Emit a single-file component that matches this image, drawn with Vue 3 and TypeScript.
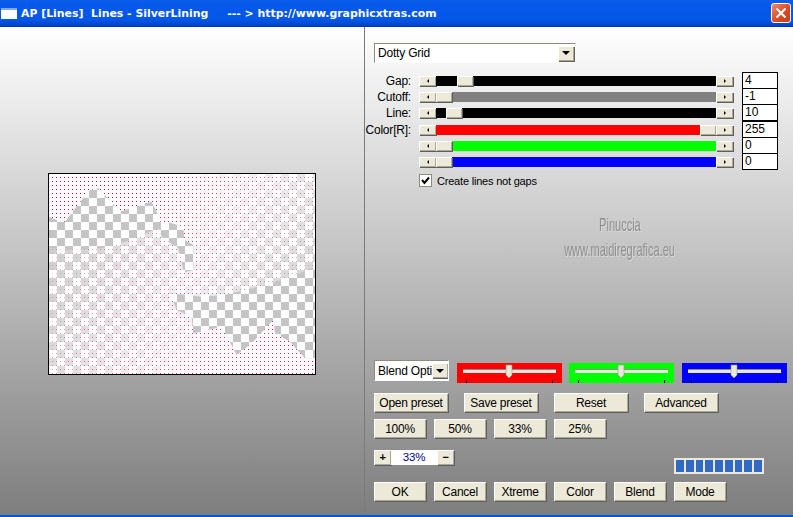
<script setup lang="ts">
interface SliderRow {
  label: string
  color: string
  offset: number
  value: string
}

const rows: SliderRow[] = [
  { label: 'Gap:', color: '#000', offset: 21, value: '4' },
  { label: 'Cutoff:', color: '#808080', offset: 0, value: '-1' },
  { label: 'Line:', color: '#000', offset: 10, value: '10' },
  { label: 'Color[R]:', color: '#f00', offset: 264, value: '255' },
  { label: '', color: '#0f0', offset: 0, value: '0' },
  { label: '', color: '#00f', offset: 0, value: '0' }
]

const trackbars = ['#f00', '#0f0', '#00f']
const presetButtons = ['Open preset', 'Save preset', 'Reset', 'Advanced']
const zoomButtons = ['100%', '50%', '33%', '25%']
const actionButtons = ['OK', 'Cancel', 'Xtreme', 'Color', 'Blend', 'Mode']

// outlines traced from a 3x crop of the preview, turned into svg pixels here
const toPoints = (list: number[][]) =>
  list.map(([x, y]) => `${(x - 12) / 3},${(y - 12) / 3}`).join(' ')

const topShape = toPoints([
  [0, 0], [810, 0], [810, 290], [740, 320], [640, 350], [540, 375], [470, 380], [375, 370],
  [385, 315], [445, 300], [445, 225], [418, 210], [415, 170], [375, 158], [350, 165],
  [335, 125], [320, 95], [300, 100], [225, 125], [190, 85], [160, 55], [135, 60], [90, 115],
  [60, 155], [35, 150], [0, 135]
])

const lowShape = toPoints([
  [0, 230], [60, 240], [170, 235], [240, 215], [340, 175], [350, 200], [400, 235], [415, 300],
  [385, 315], [375, 370], [395, 420], [440, 440], [445, 490], [530, 470], [575, 555],
  [620, 520], [685, 450], [690, 490], [735, 515], [780, 565], [815, 565], [815, 620], [0, 620]
])
</script>

<template>
  <div class="window">
    <header class="titlebar">
      <span class="app-icon"></span>
      <span class="title">AP [Lines]&nbsp; Lines - SilverLining &nbsp; &nbsp; --- &gt; http://www.graphicxtras.com</span>
      <span class="close">
        <svg width="12" height="12" viewBox="0 0 12 12">
          <path d="M1.5 1.5 L10.5 10.5 M10.5 1.5 L1.5 10.5" stroke="#fff" stroke-width="2.2" />
        </svg>
      </span>
    </header>

    <main class="body">
      <section class="preview-side">
        <svg class="preview" width="268" height="202" viewBox="-1 -1 268 202">
          <defs>
            <pattern id="checker" width="16" height="16" patternUnits="userSpaceOnUse">
              <rect width="16" height="16" fill="#fff" />
              <rect x="8" width="8" height="8" fill="#c4c4c4" />
              <rect y="8" width="8" height="8" fill="#c4c4c4" />
            </pattern>
            <pattern id="dots" x="3" y="3" width="4" height="4" patternUnits="userSpaceOnUse">
              <rect width="1" height="1" fill="#c80c36" />
            </pattern>
            <pattern id="softDots" x="3" y="3" width="4" height="4" patternUnits="userSpaceOnUse">
              <rect width="1" height="1" fill="#e8184c" />
            </pattern>
            <linearGradient id="topFade" gradientUnits="userSpaceOnUse" x1="110" y1="0" x2="266" y2="110">
              <stop offset="0" stop-color="#fff" stop-opacity="1" />
              <stop offset="0.5" stop-color="#fff" stop-opacity="0.72" />
              <stop offset="1" stop-color="#fff" stop-opacity="0.25" />
            </linearGradient>
            <linearGradient id="lowFade" gradientUnits="userSpaceOnUse" x1="0" y1="70" x2="190" y2="170">
              <stop offset="0" stop-color="#fff" stop-opacity="0.15" />
              <stop offset="0.5" stop-color="#fff" stop-opacity="0.6" />
              <stop offset="1" stop-color="#fff" stop-opacity="1" />
            </linearGradient>
            <linearGradient id="lowDots" gradientUnits="userSpaceOnUse" x1="0" y1="70" x2="190" y2="170">
              <stop offset="0" stop-color="#fff" stop-opacity="0.25" />
              <stop offset="1" stop-color="#fff" stop-opacity="1" />
            </linearGradient>
            <linearGradient id="topDots" gradientUnits="userSpaceOnUse" x1="110" y1="0" x2="266" y2="110">
              <stop offset="0" stop-color="#fff" stop-opacity="1" />
              <stop offset="1" stop-color="#fff" stop-opacity="0.25" />
            </linearGradient>
            <mask id="topMask" maskUnits="userSpaceOnUse" x="0" y="0" width="266" height="200">
              <rect width="266" height="200" fill="url(#topDots)" />
            </mask>
            <mask id="lowMask" maskUnits="userSpaceOnUse" x="0" y="0" width="266" height="200">
              <rect width="266" height="200" fill="url(#lowDots)" />
            </mask>
          </defs>
          <rect width="266" height="200" fill="url(#checker)" />
          <polygon :points="topShape" fill="url(#topFade)" />
          <polygon :points="lowShape" fill="url(#lowFade)" />
          <g mask="url(#topMask)"><polygon :points="topShape" fill="url(#dots)" /></g>
          <g mask="url(#lowMask)"><polygon :points="lowShape" fill="url(#softDots)" /></g>
          <rect x="-0.5" y="-0.5" width="267" height="201" fill="none" stroke="#000" />
        </svg>
      </section>

      <section class="controls">
        <div class="select wide">
          <span class="select-text">Dotty Grid</span>
          <span class="bevel select-btn"><i class="tri-down"></i></span>
        </div>

        <div class="sliders">
          <div v-for="row in rows" :key="row.color + row.label" class="slider-row">
            <label class="slider-label">{{ row.label }}</label>
            <div class="scrollbar">
              <span class="bevel arrow"><i class="tri-left"></i></span>
              <div class="track" :style="{ backgroundColor: row.color }">
                <span class="bevel thumb" :style="{ marginLeft: row.offset + 'px' }"></span>
              </div>
              <span class="bevel arrow"><i class="tri-right"></i></span>
            </div>
            <div class="value">{{ row.value }}</div>
          </div>
        </div>

        <div class="check-row">
          <span class="checkbox">
            <svg width="11" height="11" viewBox="0 0 11 11">
              <path d="M2 5 L4.5 8 L9 2.5" fill="none" stroke="#000" stroke-width="2" />
            </svg>
          </span>
          <span>Create lines not gaps</span>
        </div>

        <div class="watermark">
          <span class="mark-line">Pinuccia</span>
          <span class="mark-line">www.maidiregrafica.eu</span>
        </div>

        <div class="blend-row">
          <div class="select narrow">
            <span class="select-text">Blend Opti</span>
            <span class="bevel select-btn"><i class="tri-down"></i></span>
          </div>
          <div class="trackbars">
            <svg
              v-for="color in trackbars"
              :key="color"
              class="trackbar"
              width="105"
              height="20"
              viewBox="0 0 105 20"
            >
              <rect width="105" height="20" :fill="color" />
              <rect x="6" y="6" width="93" height="4" fill="#e8e8e0" />
              <rect x="6" y="6" width="93" height="1" fill="#8a8a80" />
              <rect x="9" y="17" width="1" height="3" fill="#000" />
              <rect x="95" y="17" width="1" height="3" fill="#000" />
              <path d="M49 2 H55 V12 L52 15 L49 12 Z" fill="#ece9d8" stroke="#9a9888" stroke-width="0.6" />
            </svg>
          </div>
        </div>

        <div class="btn-row presets">
          <button v-for="label in presetButtons" :key="label" class="bevel btn">{{ label }}</button>
        </div>

        <div class="btn-row zooms">
          <button v-for="label in zoomButtons" :key="label" class="bevel btn small">{{ label }}</button>
        </div>

        <div class="zoom-row">
          <div class="stepper">
            <span class="bevel step"><b>+</b></span>
            <span class="zoom-value">33%</span>
            <span class="bevel step"><b>−</b></span>
          </div>
          <div class="progress">
            <i v-for="n in 9" :key="n"></i>
          </div>
        </div>

        <div class="btn-row actions">
          <button v-for="label in actionButtons" :key="label" class="bevel btn small">{{ label }}</button>
        </div>
      </section>
    </main>
    <div class="bottom-edge"></div>
  </div>
</template>

<style scoped>
.window {
  width: 793px;
  height: 517px;
  display: flex;
  flex-direction: column;
  overflow: hidden;
  font-family: 'Liberation Sans', Arial, sans-serif;
  font-size: 11px;
  letter-spacing: -0.2px;
  color: #000;
}

/* title bar */
.titlebar {
  height: 27px;
  flex: none;
  display: flex;
  align-items: center;
  position: relative;
  background: linear-gradient(#0a5fe8 0, #0759ec 3px, #0356e6 20px, #0347d0 25px, #02319c 27px);
  color: #fff;
}
.app-icon {
  width: 16px;
  height: 11px;
  margin: 0 4px 0 1px;
  background: #fff;
  border-top: 2px solid #7fa8ee;
}
.title {
  font-family: 'DejaVu Sans', Verdana, sans-serif;
  font-weight: 700;
  font-size: 10.9px;
  letter-spacing: 0;
  white-space: pre;
}
.close {
  position: absolute;
  left: 771px;
  top: 3px;
  width: 20px;
  height: 20px;
  display: flex;
  align-items: center;
  justify-content: center;
  border: 1px solid #fff;
  border-radius: 3px;
  background: linear-gradient(135deg, #f0866a, #dd4a24 55%, #c2401e);
}

/* main area */
.body {
  flex: 1;
  display: flex;
  min-height: 0;
  background: linear-gradient(#fff, #7e7e7e);
}
.preview-side {
  width: 365px;
  flex: none;
  border-right: 1px solid #7a7a7a;
  display: flex;
  justify-content: flex-start;
  padding: 146px 0 0 48px;
}
.preview {
  display: block;
}
.controls {
  flex: 1;
  display: flex;
  flex-direction: column;
  padding: 16px 0 14px 9px;
}

.bevel {
  background: #ece9d8;
  box-shadow: inset 1px 1px 0 #fff, inset -1px -1px 0 #aca899, 1px 1px 0 #5f5e58;
}

/* dropdowns */
.select {
  display: flex;
  align-items: center;
  justify-content: space-between;
  height: 20px;
  background: #fff;
  border: 1px solid #8d8b7d;
  border-right-color: #fff;
  border-bottom-color: #fff;
  padding-right: 1px;
  overflow: hidden;
}
.select.wide {
  width: 202px;
}
.select.narrow {
  width: 75px;
  height: 21px;
}
.select-text {
  padding-left: 3px;
  font-size: 12px;
  white-space: nowrap;
}
.select-btn {
  width: 16px;
  height: 15px;
  flex: none;
  display: flex;
  align-items: center;
  justify-content: center;
  position: relative;
}
.tri-down {
  border-left: 4px solid transparent;
  border-right: 4px solid transparent;
  border-top: 4px solid #000;
}
.tri-left {
  border-top: 2px solid transparent;
  border-bottom: 2px solid transparent;
  border-right: 2px solid #000;
}
.tri-right {
  border-top: 2px solid transparent;
  border-bottom: 2px solid transparent;
  border-left: 2px solid #000;
}

/* slider rows */
.sliders {
  margin: 10px 0 0 -9px;
  display: flex;
  flex-direction: column;
}
.slider-row {
  height: 16px;
  display: flex;
  align-items: center;
}
.slider-row:nth-child(4) {
  margin-top: 1px;
}
.slider-label {
  width: 46px;
  text-align: right;
  font-size: 12px;
  white-space: nowrap;
}
.scrollbar {
  margin-left: 8px;
  width: 314px;
  height: 10px;
  display: flex;
}
.arrow {
  width: 17px;
  flex: none;
  display: flex;
  align-items: center;
  justify-content: center;
}
.track {
  flex: 1;
  display: flex;
}
.thumb {
  width: 16px;
  height: 10px;
  flex: none;
}
.value {
  margin-left: 9px;
  width: 36px;
  height: 17px;
  margin-top: -1px;
  background: #fff;
  border: 1px solid #000;
  padding-left: 2px;
  line-height: 15px;
  font-size: 12px;
  letter-spacing: 0;
}

/* checkbox */
.check-row {
  margin: 4px 0 0 45px;
  height: 13px;
  display: flex;
  align-items: center;
  gap: 5px;
  font-size: 11px;
}
.checkbox {
  width: 13px;
  height: 13px;
  background: #fff;
  border: 1px solid #8d8b7d;
  display: flex;
  align-items: center;
  justify-content: center;
}

/* watermark */
.watermark {
  margin: 25px 0 0 191px;
  width: 110px;
  display: flex;
  flex-direction: column;
  align-items: center;
  color: #8f8f8f;
  font-size: 19px;
  letter-spacing: 0;
  line-height: 25px;
  text-shadow: 1px 1px 0 #dcdcdc;
}
.mark-line {
  transform: scaleX(0.58);
  white-space: nowrap;
}

/* blend row */
.blend-row {
  margin-top: auto;
  display: flex;
  align-items: flex-start;
}
.trackbars {
  margin: 3px 0 0 8px;
  display: flex;
  gap: 7px;
}
.trackbar {
  display: block;
}
.trackbar:last-child {
  margin-left: 1px;
}

/* buttons */
.btn-row {
  display: flex;
}
.presets {
  margin-top: 10px;
  gap: 16px;
}
.zooms {
  margin-top: 7px;
  gap: 8px;
}
.actions {
  margin-top: 8px;
  gap: 8px;
}
.btn {
  width: 74px;
  height: 19px;
  padding: 0;
  border: 0;
  font-family: inherit;
  font-size: 12px;
  letter-spacing: -0.25px;
  color: #000;
}
.btn.small {
  width: 52px;
}

/* zoom stepper and progress */
.zoom-row {
  margin-top: 12px;
  height: 24px;
  display: flex;
  align-items: flex-start;
}
.stepper {
  display: flex;
  width: 80px;
  height: 15px;
}
.step {
  width: 17px;
  flex: none;
  display: flex;
  align-items: center;
  justify-content: center;
  font-size: 11px;
  line-height: 1;
}
.zoom-value {
  flex: 1;
  background: #fff;
  color: #000080;
  text-align: center;
  font-size: 11.5px;
  line-height: 15px;
}
.progress {
  margin: 8px 0 0 220px;
  width: 90px;
  height: 16px;
  padding: 2px;
  background: #ece9d8;
  display: flex;
  gap: 2px;
}
.progress i {
  width: 8px;
  background: #316ac5;
}

.bottom-edge {
  height: 2px;
  flex: none;
  background: #0355e0;
}
</style>

<style>
html,
body {
  margin: 0;
  overflow: hidden;
}
*,
*::before,
*::after {
  box-sizing: border-box;
}
</style>
